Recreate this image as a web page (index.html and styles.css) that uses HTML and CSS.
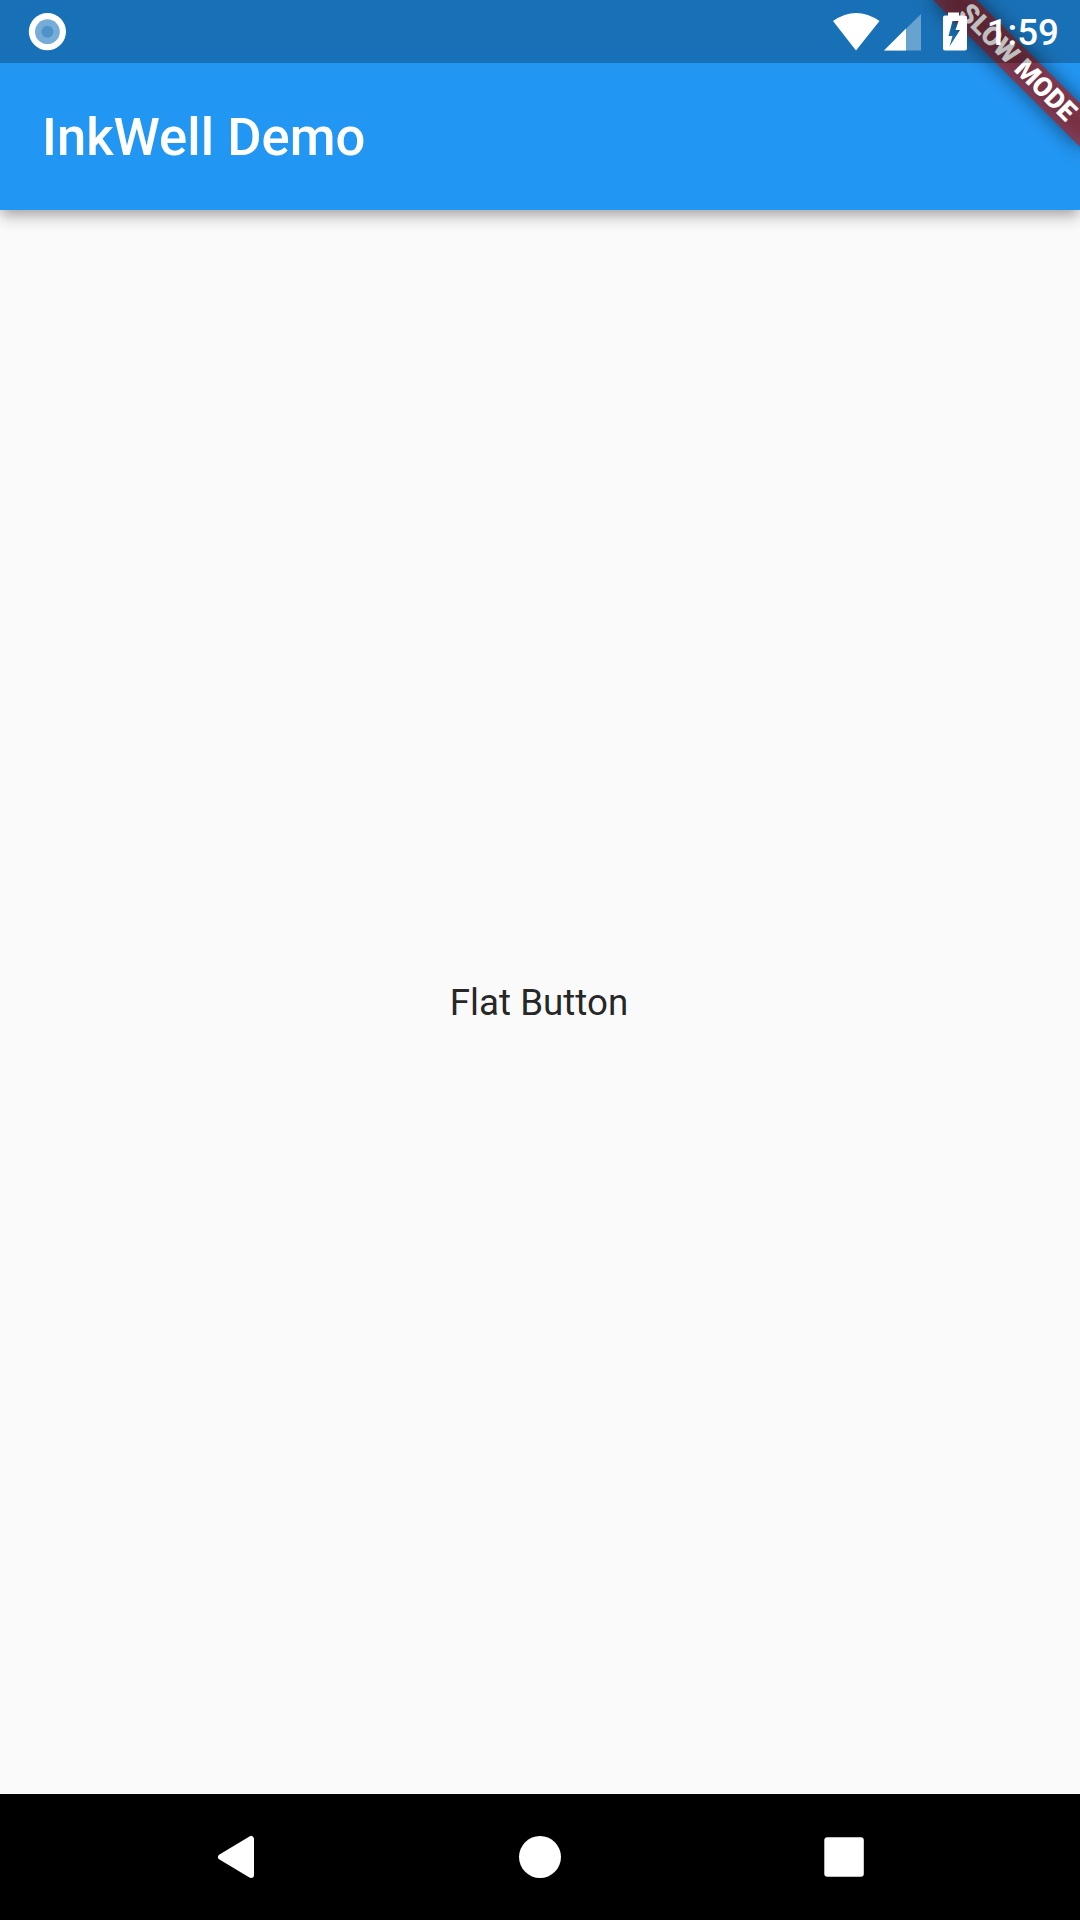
FILE: index.html
```html
<!DOCTYPE html>
<html lang="en">
<head>
<meta charset="utf-8">
<title>InkWell Demo</title>
<link rel="stylesheet" href="styles.css">
</head>
<body>
<div class="screen">
  <div class="banner"><span class="banner-text">SLOW MODE</span></div>
  <div class="status-bar">
    <svg class="notification" width="38" height="38" viewBox="0 0 38 38">
      <circle cx="19.400" cy="18.700" r="18.600" fill="#fff"/>
      <circle cx="19.400" cy="18.700" r="12.400" fill="#76add8"/>
      <circle cx="19.400" cy="18.700" r="6" fill="#4f92c8"/>
    </svg>
    <svg class="indicators" width="136" height="40" viewBox="0 0 136 40">
      <path d="M0 9Q23-7 46.500 9L23 38.500Z" fill="#fff"/>
      <path d="M51 38.500L88 2V38.500Z" fill="#fff" fill-opacity=".35"/>
      <path d="M51 38.500L73 16.500V38.500Z" fill="#fff"/>
      <path fill-rule="evenodd" d="M115 .5h11v3h6q2 0 2 2v31q0 2-2 2h-20q-2 0-2-2v-31q0-2 2-2h3ZM119.500 9H125.500L122.500 18H127L116.500 34.500L119.500 24H115.500Z" fill="#fff"/>
    </svg>
    <span class="clock">1:59</span>
  </div>
  <header class="app-bar"><h1 class="title">InkWell Demo</h1></header>
  <main class="content"><button class="flat-button">Flat Button</button></main>
  <nav class="nav-bar">
    <svg width="44" height="44" viewBox="0 0 44 44"><path d="M7 22L37 4V40Z" fill="#fff" stroke="#fff" stroke-width="6" stroke-linejoin="round"/></svg>
    <svg width="44" height="44" viewBox="0 0 44 44"><circle cx="22" cy="22" r="21" fill="#fff"/></svg>
    <svg width="44" height="44" viewBox="0 0 44 44"><rect x="2.300" y="2.300" width="39.500" height="39.500" rx="3" fill="#fff"/></svg>
  </nav>
</div>
</body>
</html>
```
FILE: styles.css
```css
body {
  margin: 0;
  font-family: Roboto, sans-serif;
}

.screen {
  position: relative;
  display: flex;
  flex-direction: column;
  width: 1080px;
  height: 1920px;
  overflow: hidden;
  background: #fafafa;
}

.status-bar {
  position: relative;
  z-index: 3;
  box-sizing: border-box;
  display: flex;
  align-items: center;
  height: 63px;
  padding: 0 21px 0 28px;
  background: rgba(0, 0, 0, .25);
}

.indicators {
  margin-left: auto;
  margin-right: 18px;
}

.clock {
  padding-top: 2px;
  color: #fff;
  font-size: 36.75px;
  font-weight: 500;
  line-height: 63px;
}

/* The app bar's surface continues beneath the translucent status bar. */
.app-bar {
  position: relative;
  z-index: 1;
  box-sizing: border-box;
  display: flex;
  align-items: center;
  height: 210px;
  margin-top: -63px;
  padding: 63px 42px 0;
  background: #2196f3;
  box-shadow: 0 5px 10px -3px rgba(0, 0, 0, .2), 0 10px 13px rgba(0, 0, 0, .12), 0 3px 20px rgba(0, 0, 0, .1);
}

.title {
  margin: 0;
  color: #fff;
  font-size: 52.6px;
  font-weight: 500;
}

.content {
  flex: 1;
  display: flex;
  align-items: center;
  justify-content: center;
}

.flat-button {
  padding: 32px 34px 32px 32px;
  border: 0;
  background: none;
  color: rgba(0, 0, 0, .87);
  font: 400 36.75px Roboto, sans-serif;
}

.nav-bar {
  display: flex;
  align-items: center;
  justify-content: center;
  gap: 260px;
  height: 126px;
  background: #000;
}

/* Diagonal ribbon over the top right corner. */
.banner {
  position: absolute;
  z-index: 2;
  top: 73px;
  left: 975px;
  width: 210px;
  height: 31px;
  transform: rotate(45deg);
  transform-origin: 105px -73px;
  text-align: center;
}

.banner::before,
.banner::after {
  content: "";
  position: absolute;
  inset: 0;
}

.banner::before {
  background: rgba(0, 0, 0, .5);
  filter: blur(10px);
}

.banner::after {
  background: rgba(183, 28, 28, .627);
}

.banner-text {
  position: relative;
  z-index: 1;
  display: block;
  color: #fff;
  font-size: 26.775px;
  font-weight: 900;
  line-height: 31px;
}
```
